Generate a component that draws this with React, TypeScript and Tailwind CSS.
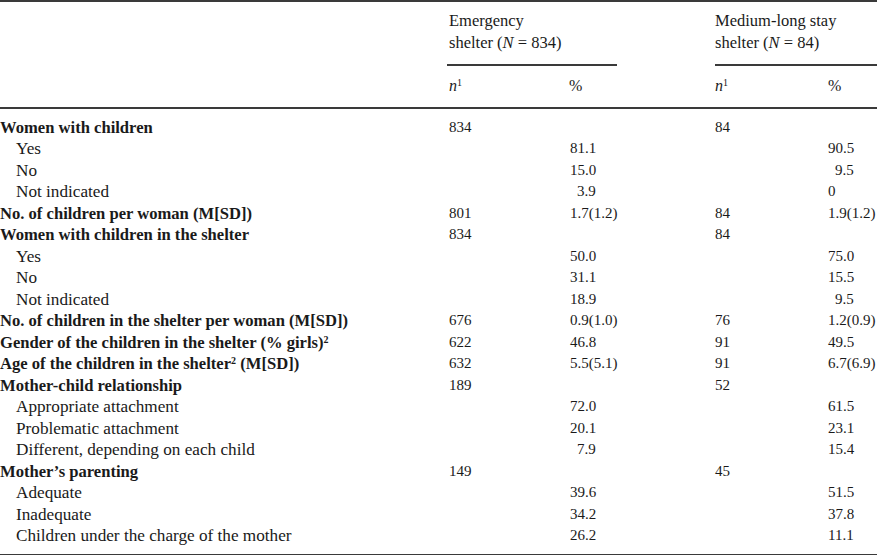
import React from "react";

type Row = { label: React.ReactNode; bold?: boolean; n1?: string; p1?: string; p1pad?: boolean; n2?: string; p2?: string; p2pad?: boolean };

const sup = "text-[10px] leading-none";

const rows: Row[] = [
  { label: "Women with children", bold: true, n1: "834", n2: "84" },
  { label: "Yes", p1: "81.1", p2: "90.5" },
  { label: "No", p1: "15.0", p2: "9.5", p2pad: true },
  { label: "Not indicated", p1: "3.9", p1pad: true, p2: "0" },
  { label: "No. of children per woman (M[SD])", bold: true, n1: "801", p1: "1.7(1.2)", n2: "84", p2: "1.9(1.2)" },
  { label: "Women with children in the shelter", bold: true, n1: "834", n2: "84" },
  { label: "Yes", p1: "50.0", p2: "75.0" },
  { label: "No", p1: "31.1", p2: "15.5" },
  { label: "Not indicated", p1: "18.9", p2: "9.5", p2pad: true },
  { label: "No. of children in the shelter per woman (M[SD])", bold: true, n1: "676", p1: "0.9(1.0)", n2: "76", p2: "1.2(0.9)" },
  { label: <>Gender of the children in the shelter (% girls)<sup className={sup}>2</sup></>, bold: true, n1: "622", p1: "46.8", n2: "91", p2: "49.5" },
  { label: <>Age of the children in the shelter<sup className={sup}>2</sup> (M[SD])</>, bold: true, n1: "632", p1: "5.5(5.1)", n2: "91", p2: "6.7(6.9)" },
  { label: "Mother-child relationship", bold: true, n1: "189", n2: "52" },
  { label: "Appropriate attachment", p1: "72.0", p2: "61.5" },
  { label: "Problematic attachment", p1: "20.1", p2: "23.1" },
  { label: "Different, depending on each child", p1: "7.9", p1pad: true, p2: "15.4" },
  { label: "Mother’s parenting", bold: true, n1: "149", n2: "45" },
  { label: "Adequate", p1: "39.6", p2: "51.5" },
  { label: "Inadequate", p1: "34.2", p2: "37.8" },
  { label: "Children under the charge of the mother", p1: "26.2", p2: "11.1" },
];

const grid = "grid grid-cols-[447px_121px_147px_113px_1fr]";

export default function App() {
  return (
    <div
      className="w-[877px] h-[556px] bg-white text-[#1a1a1a] text-[15px] overflow-hidden"
      style={{ fontFamily: '"Liberation Serif", serif' }}
    >
      <div className="h-[2px] bg-[#3a3a3a]" />
      <div className={`${grid} pt-[8px] text-[16.5px]`}>
        <div />
        <div className="col-span-2 pl-[2px]">
          <div className="leading-[21.5px]">Emergency</div>
          <div className="leading-[21.5px]">
            shelter (<i>N</i> = 834)
          </div>
          <div className="mt-[11px] h-[1.5px] w-[170px] -ml-[2px] bg-[#3a3a3a]" />
        </div>
        <div className="col-span-2">
          <div className="leading-[21.5px]">Medium-long stay</div>
          <div className="leading-[21.5px]">
            shelter (<i>N</i> = 84)
          </div>
          <div className="mt-[11px] h-[1.5px] bg-[#3a3a3a]" />
        </div>
      </div>
      <div className={`${grid} h-[41px] items-center text-[16px]`}>
        <div />
        <div className="pl-[2px]">
          <i>n</i>
          <sup className={sup}>1</sup>
        </div>
        <div className="pl-[1px]">%</div>
        <div>
          <i>n</i>
          <sup className={sup}>1</sup>
        </div>
        <div>%</div>
      </div>
      <div className="h-[2px] bg-[#3a3a3a]" />
      <div className="pt-[8px]">
        {rows.map((r, i) => (
          <div key={i} className={`${grid} h-[21.5px] leading-[21.5px]`}>
            <div
              className={
                r.bold
                  ? "font-bold whitespace-nowrap text-[16.6px]"
                  : "pl-[16px] whitespace-nowrap text-[17.2px]"
              }
            >
              {r.label}
            </div>
            <div className="pl-[2px]">{r.n1}</div>
            <div className={r.p1pad ? "pl-[9px]" : "pl-[2px]"}>{r.p1}</div>
            <div>{r.n2}</div>
            <div className={r.p2pad ? "pl-[7px]" : ""}>{r.p2}</div>
          </div>
        ))}
      </div>
      <div className="mt-[7px] h-[1.5px] bg-[#3a3a3a]" />
    </div>
  );
}
